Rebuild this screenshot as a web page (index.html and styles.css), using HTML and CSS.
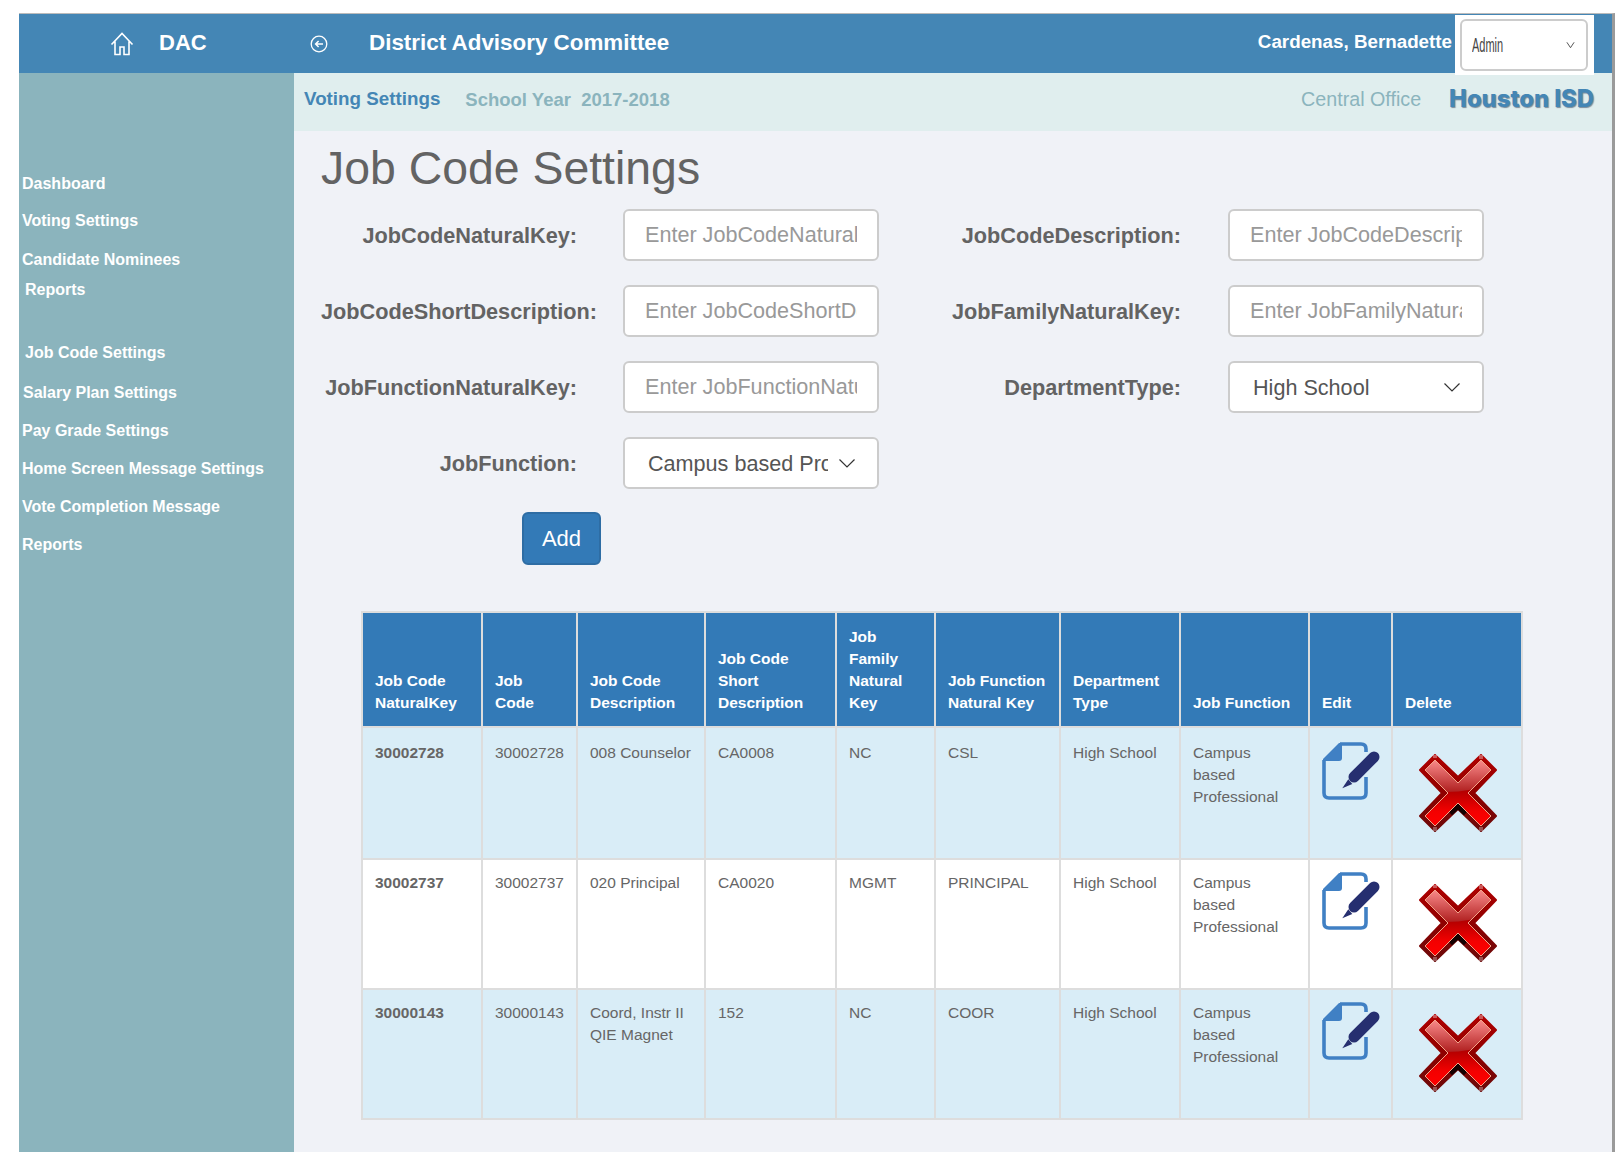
FILE: index.html
```html
<!DOCTYPE html>
<html lang="en">
<head>
    <meta charset="UTF-8">
    <title>Job Code Settings</title>
    <link rel="stylesheet" href="styles.css">
</head>
<body>
    <svg class="svg-defs" width="0" height="0">
        <defs>
            <linearGradient id="xOuter" x1="0" y1="0" x2="0" y2="1">
                <stop offset="0" stop-color="#b00000"/>
                <stop offset="0.55" stop-color="#8c0000"/>
                <stop offset="1" stop-color="#6a0a0a"/>
            </linearGradient>
            <linearGradient id="xBase" x1="0" y1="0" x2="0" y2="1">
                <stop offset="0.45" stop-color="#b00000"/>
                <stop offset="0.78" stop-color="#f40000"/>
                <stop offset="1" stop-color="#ff0000"/>
            </linearGradient>
            <linearGradient id="xGloss" x1="0" y1="0" x2="0" y2="1">
                <stop offset="0.15" stop-color="#fa8c8c"/>
                <stop offset="1" stop-color="#b02020"/>
            </linearGradient>
            <clipPath id="xClip">
                <path d="M16 6L39 29L62 6L72 16L49 39L72 62L62 72L39 49L16 72L6 62L29 39L6 16Z"/>
            </clipPath>
            <symbol id="icon-edit" viewBox="0 0 58 58">
                <path d="M18 2H39Q44 2 44 7V10M44 35V51Q44 56 39 56H7Q2 56 2 51V18" fill="none" stroke="#4080c4" stroke-width="3.6"/>
                <path d="M1 17L17 1H20V16Q20 19 17 19H1Z" fill="#4080c4"/>
                <path d="M32 35L52 15" stroke="#262f70" stroke-width="11" stroke-linecap="round"/>
                <path d="M20.3 46.3L26.3 37.3L30.3 42Z" fill="#262f70"/>
            </symbol>
            <symbol id="icon-delete" viewBox="0 0 78 78">
                <path d="M16 1L39 23L62 1L77 16L55 39L77 62L62 77L39 55L16 77L1 62L23 39L1 16Z" fill="url(#xOuter)" stroke="url(#xOuter)" stroke-width="2" stroke-linejoin="round"/>
                <path d="M31 59L39 51.5L47 59" fill="none" stroke="#140000" stroke-width="6"/>
                <path d="M16 6L39 29L62 6L72 16L49 39L72 62L62 72L39 49L16 72L6 62L29 39L6 16Z" fill="url(#xBase)"/>
                <g clip-path="url(#xClip)">
                    <path d="M0 0H78V26Q56 38 27 38H0Z" fill="url(#xGloss)"/>
                </g>
                <path d="M16 6L39 29L62 6L72 16L49 39L72 62L62 72L39 49L16 72L6 62L29 39L6 16Z" fill="none" stroke="#f2a58a" stroke-width="1"/>
                <path d="M62 1V5M16 1V4" stroke="#fff" stroke-opacity="0.35" stroke-width="4"/>
                <path d="M16 73V77M62 73V77" stroke="#fff" stroke-opacity="0.3" stroke-width="4"/>
            </symbol>
        </defs>
    </svg>

    <div class="app">
        <header class="topbar">
            <div class="brand">
                <svg class="icon-home" viewBox="0 0 24 24" fill="none" stroke="#fff" stroke-width="1.6">
                    <path d="M1.5 12.5L12 1.5L22.5 12.5M5 9.5V22.5H10V15H14V22.5H19V9.5"/>
                </svg>
                <span class="brand-name">DAC</span>
            </div>
            <svg class="icon-back" viewBox="0 0 18 18" fill="none" stroke="#fff">
                <circle cx="9" cy="9" r="7.8" stroke-width="1.3"/>
                <path d="M13 9H6M8.6 6L5.6 9L8.6 12" stroke-width="1.5"/>
            </svg>
            <div class="app-title">District Advisory Committee</div>
            <div class="user-name">Cardenas, Bernadette</div>
            <div class="role-box">
                <div class="role-select">
                    <span class="role-text">Admin</span>
                    <svg class="role-arrow" viewBox="0 0 10 8" fill="none" stroke="#444"><path d="M1 1L5 7L9 1"/></svg>
                </div>
            </div>
        </header>

        <div class="main-row">
            <nav class="sidebar">
                <a class="nav-item dashboard" href="#">Dashboard</a>
                <a class="nav-item voting" href="#">Voting Settings</a>
                <a class="nav-item candidate" href="#">Candidate Nominees</a>
                <a class="nav-item reports-sub" href="#">Reports</a>
                <a class="nav-item job-code" href="#">Job Code Settings</a>
                <a class="nav-item salary" href="#">Salary Plan Settings</a>
                <a class="nav-item" href="#">Pay Grade Settings</a>
                <a class="nav-item" href="#">Home Screen Message Settings</a>
                <a class="nav-item" href="#">Vote Completion Message</a>
                <a class="nav-item" href="#">Reports</a>
            </nav>

            <div class="page">
                <div class="subbar">
                    <span class="sub-voting">Voting Settings</span>
                    <span class="sub-year">School Year&nbsp; 2017-2018</span>
                    <span class="sub-office">Central Office</span>
                    <span class="sub-isd">Houston ISD</span>
                </div>

                <main class="content">
                    <h1 class="page-title">Job Code Settings</h1>

                    <form class="job-form">
                        <label class="field-label">JobCodeNaturalKey:</label>
                        <input class="field" placeholder="Enter JobCodeNaturalKey">
                        <label class="field-label">JobCodeDescription:</label>
                        <input class="field" placeholder="Enter JobCodeDescription">

                        <label class="field-label">JobCodeShortDescription:</label>
                        <input class="field" placeholder="Enter JobCodeShortDescription">
                        <label class="field-label">JobFamilyNaturalKey:</label>
                        <input class="field" placeholder="Enter JobFamilyNaturalKey">

                        <label class="field-label">JobFunctionNaturalKey:</label>
                        <input class="field" placeholder="Enter JobFunctionNaturalKey">
                        <label class="field-label">DepartmentType:</label>
                        <div class="select-wrap">
                            <select class="field field-select"><option>High School</option></select>
                            <svg class="select-arrow" viewBox="0 0 16 9" fill="none" stroke="#333" stroke-width="1.2"><path d="M.5.5L8 8L15.5.5"/></svg>
                        </div>

                        <label class="field-label">JobFunction:</label>
                        <div class="select-wrap">
                            <select class="field field-select"><option>Campus based Professional</option></select>
                            <svg class="select-arrow" viewBox="0 0 16 9" fill="none" stroke="#333" stroke-width="1.2"><path d="M.5.5L8 8L15.5.5"/></svg>
                        </div>
                    </form>

                    <button class="btn-add" type="button">Add</button>

                    <table class="job-table">
                        <colgroup>
                            <col class="c1"><col class="c2"><col class="c3"><col class="c4"><col class="c5">
                            <col class="c6"><col class="c7"><col class="c8"><col class="c9"><col class="c10">
                        </colgroup>
                        <thead>
                            <tr>
                                <th>Job Code NaturalKey</th>
                                <th>Job<br>Code</th>
                                <th>Job Code Description</th>
                                <th>Job Code Short Description</th>
                                <th>Job<br>Family Natural Key</th>
                                <th>Job Function Natural Key</th>
                                <th>Department Type</th>
                                <th>Job Function</th>
                                <th>Edit</th>
                                <th>Delete</th>
                            </tr>
                        </thead>
                        <tbody>
                            <tr class="alt">
                                <td><b>30002728</b></td><td>30002728</td><td>008 Counselor</td><td>CA0008</td><td>NC</td><td>CSL</td><td>High School</td>
                                <td>Campus<br>based<br>Professional</td>
                                <td class="cell-edit"><svg class="ico-edit"><use href="#icon-edit"/></svg></td>
                                <td class="cell-delete"><svg class="ico-delete"><use href="#icon-delete"/></svg></td>
                            </tr>
                            <tr>
                                <td><b>30002737</b></td><td>30002737</td><td>020 Principal</td><td>CA0020</td><td>MGMT</td><td>PRINCIPAL</td><td>High School</td>
                                <td>Campus<br>based<br>Professional</td>
                                <td class="cell-edit"><svg class="ico-edit"><use href="#icon-edit"/></svg></td>
                                <td class="cell-delete"><svg class="ico-delete"><use href="#icon-delete"/></svg></td>
                            </tr>
                            <tr class="alt">
                                <td><b>30000143</b></td><td>30000143</td><td>Coord, Instr II QIE Magnet</td><td>152</td><td>NC</td><td>COOR</td><td>High School</td>
                                <td>Campus<br>based<br>Professional</td>
                                <td class="cell-edit"><svg class="ico-edit"><use href="#icon-edit"/></svg></td>
                                <td class="cell-delete"><svg class="ico-delete"><use href="#icon-delete"/></svg></td>
                            </tr>
                        </tbody>
                    </table>
                </main>
            </div>
        </div>
    </div>
</body>
</html>
```

FILE: styles.css
```css
html, body {
    margin: 0;
    height: 1152px;
    overflow: hidden;
    background: #fff;
}
body {
    font-family: "Liberation Sans", Arial, sans-serif;
    color: #636363;
}
.svg-defs {
    display: block;
    height: 0;
}
.app {
    margin: 13px 3px 0 19px;
    height: 1139px;
    border-top: 1px solid #bbb;
    border-right: 3px solid #9a9a9a;
    display: flex;
    flex-direction: column;
}

/* top bar */
.topbar {
    height: 59px;
    flex: none;
    background: #4486b5;
    color: #fff;
    display: flex;
    align-items: center;
    font-weight: bold;
}
.brand {
    width: 290px;
    flex: none;
    display: flex;
    align-items: center;
    padding-left: 91px;
    box-sizing: border-box;
    font-size: 22px;
}
.brand-name {
    margin-top: -2px;
}
.icon-home {
    width: 24px;
    height: 24px;
    margin-right: 25px;
}
.icon-back {
    width: 18px;
    height: 18px;
    margin-left: 1px;
}
.app-title {
    font-size: 22.4px;
    margin: -2px 0 0 41px;
}
.user-name {
    margin: -4px 1px 0 auto;
    font-size: 18.8px;
}
.role-box {
    align-self: flex-start;
    width: 139px;
    height: 60px;
    margin: 1px 18px 0 2px;
    padding: 4px 6px 0 5px;
    box-sizing: border-box;
    background: #fff;
    position: relative;
}
.role-select {
    height: 52px;
    box-sizing: border-box;
    border: 2px solid #ccc;
    border-radius: 6px;
    display: flex;
    align-items: center;
    justify-content: space-between;
    padding: 0 11px 0 10px;
    color: #444;
    font-weight: normal;
}
.role-text {
    font-size: 20px;
    display: inline-block;
    transform: scaleX(0.55);
    transform-origin: left center;
}
.role-arrow {
    width: 9px;
    height: 8px;
}

/* sidebar */
.main-row {
    flex: 1;
    display: flex;
    min-height: 0;
}
.sidebar {
    width: 275px;
    flex: none;
    background: #8bb4bd;
    padding-top: 100px;
    box-sizing: border-box;
    display: flex;
    flex-direction: column;
}
.nav-item {
    color: #fff;
    font-size: 16px;
    font-weight: bold;
    text-decoration: none;
    line-height: 20px;
    padding-left: 3px;
    margin-bottom: 18px;
}
.dashboard { padding-top: 1px; margin-bottom: 17px; }
.voting { margin-bottom: 19px; }
.candidate { margin-bottom: 10px; }
.reports-sub { padding-left: 6px; margin-bottom: 43px; }
.job-code { padding-left: 6px; margin-bottom: 20px; }
.salary { padding-left: 4px; }

/* page */
.page {
    flex: 1;
    min-width: 0;
    background: #f0f2f7;
}
.subbar {
    height: 58px;
    background: #e0eeee;
    display: flex;
    align-items: center;
    padding: 0 18px 4px 10px;
    box-sizing: border-box;
    font-size: 18.8px;
    font-weight: bold;
}
.sub-voting {
    color: #4486b5;
    margin-top: -3px;
}
.sub-year {
    color: #8bb4bd;
    margin-left: 25px;
    font-size: 18.5px;
}
.sub-office {
    color: #8bb4bd;
    margin-left: auto;
    font-size: 19.7px;
    font-weight: normal;
    margin-top: -2px;
}
.sub-isd {
    font-family: Inter, "Liberation Sans", sans-serif;
    font-weight: 800;
    font-size: 23.8px;
    color: #4486b5;
    text-shadow: 1px 1px 1px #7a8a99;
    margin-left: 28px;
    margin-top: -3px;
}
.content {
    padding: 8px 0 0 27px;
}
.page-title {
    margin: 0 0 12px;
    font-size: 46.4px;
    font-weight: normal;
    line-height: 58px;
    color: #636363;
}

/* form */
.job-form {
    display: grid;
    grid-template-columns: 256px 300px 305px 301px;
    row-gap: 24px;
    align-items: center;
}
.field-label {
    font-size: 21.7px;
    font-weight: bold;
    text-align: right;
    white-space: nowrap;
    padding-top: 2px;
}
.field-label:nth-of-type(even) {
    padding-right: 1px;
}
.job-form > .field,
.job-form > .select-wrap {
    margin-left: 46px;
}
.field {
    height: 52px;
    width: 256px;
    box-sizing: border-box;
    border: 2px solid #ccc;
    border-radius: 6px;
    background: #fff;
    padding: 0 20px;
    font: 21.6px "Liberation Sans", Arial, sans-serif;
    color: #555;
    outline: none;
}
.field::placeholder {
    color: #999;
    opacity: 1;
}
.select-wrap {
    position: relative;
    width: 256px;
}
.field-select {
    appearance: none;
    padding: 0 49px 0 23px;
    display: block;
}
.select-arrow {
    position: absolute;
    right: 24px;
    top: 22px;
    width: 16px;
    height: 9px;
}
.btn-add {
    display: block;
    margin: 23px 0 46px 201px;
    width: 79px;
    height: 53px;
    background: #337ab7;
    border: 2px solid #2e6da4;
    border-radius: 6px;
    color: #fff;
    font: 22px "Liberation Sans", Arial, sans-serif;
}

/* table */
.job-table {
    margin-left: 40px;
    width: 1160px;
    table-layout: fixed;
    border-collapse: collapse;
    font-size: 15.5px;
    line-height: 22px;
    color: #666;
}
.c1 { width: 120px; }
.c2 { width: 95px; }
.c3 { width: 128px; }
.c4 { width: 131px; }
.c5 { width: 99px; }
.c6 { width: 125px; }
.c7 { width: 120px; }
.c8 { width: 129px; }
.c9 { width: 83px; }
.c10 { width: 130px; }
.job-table th,
.job-table td {
    border: 2px solid #ddd;
    padding: 0 12px;
    text-align: left;
    box-sizing: border-box;
}
.job-table th {
    height: 115px;
    background: #337ab7;
    color: #fff;
    vertical-align: bottom;
    padding-bottom: 12px;
    font-weight: bold;
}
.job-table td {
    height: 130px;
    background: #fff;
    vertical-align: top;
    padding-top: 12px;
}
.job-table .alt td {
    background: #d9edf7;
}
.job-table tbody tr:first-child td {
    height: 132px;
    padding-top: 14px;
}
.ico-edit {
    width: 58px;
    height: 58px;
    display: block;
}
.job-table td.cell-delete {
    padding: 24px 0 0 26px;
}
.job-table tbody tr:first-child td.cell-delete {
    padding-top: 26px;
}
.ico-delete {
    width: 78px;
    height: 78px;
    display: block;
}
```
